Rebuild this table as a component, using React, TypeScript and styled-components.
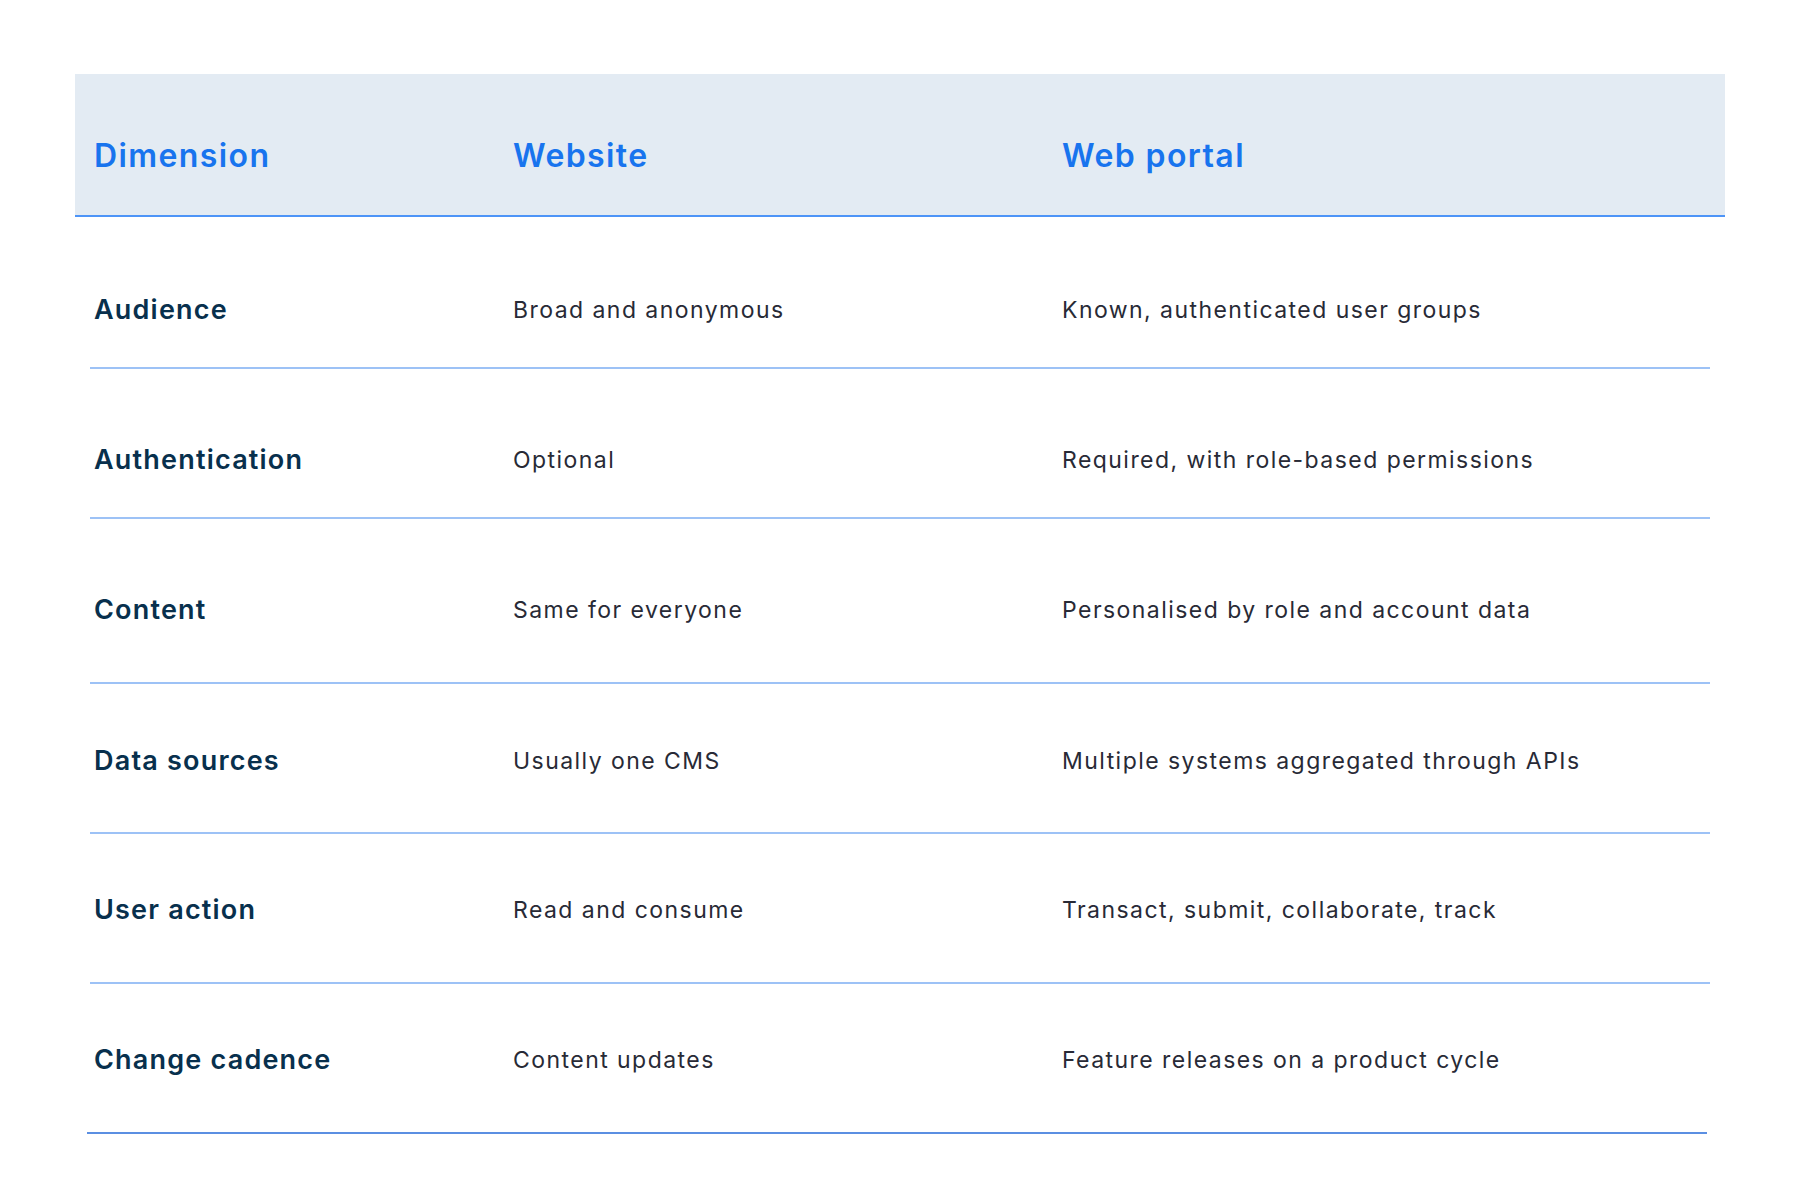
import React from "react";
import styled, { createGlobalStyle } from "styled-components";

const GlobalStyle = createGlobalStyle`
  html, body { margin: 0; padding: 0; background: #ffffff; }
  body { font-family: "Inter", "Liberation Sans", sans-serif; -webkit-font-smoothing: antialiased; }
`;

const Page = styled.div`
  padding: 74px 0 0 75px;
  width: 1650px;
`;

const Table = styled.div`
  display: flex;
  flex-direction: column;
`;

const HeaderRow = styled.div`
  display: grid;
  grid-template-columns: 419px 549px 1fr;
  padding: 62px 0 39px 19px;
  background: #e3ebf3;
  border-bottom: 2px solid #4d94f7;
`;

const HeaderCell = styled.div`
  font-family: "Inter", sans-serif;
  font-size: 32px;
  line-height: 40px;
  font-weight: 600;
  letter-spacing: 1.4px;
  color: #1874ee;
`;

const Body = styled.div`
  display: flex;
  flex-direction: column;
  margin: 0 15px;
`;

const Row = styled.div<{ $top: number; $bottom: number; $last?: boolean }>`
  display: grid;
  grid-template-columns: 419px 549px 1fr;
  align-items: center;
  padding: ${(p) => p.$top}px 0 ${(p) => p.$bottom}px ${(p) => (p.$last ? 7 : 4)}px;
  border-bottom: 2px solid ${(p) => (p.$last ? "#5b8fe2" : "#9dc2f6")};
  margin-left: ${(p) => (p.$last ? "-3px" : "0")};
  margin-right: ${(p) => (p.$last ? "3px" : "0")};
`;

const Label = styled.div`
  font-family: "Inter", sans-serif;
  font-size: 27px;
  line-height: 32px;
  font-weight: 600;
  letter-spacing: 1.2px;
  color: #08304d;
`;

const Value = styled.div`
  font-family: "Inter", sans-serif;
  font-size: 23px;
  line-height: 32px;
  font-weight: 400;
  letter-spacing: 1.45px;
  color: #282a36;
`;

type RowData = {
  label: string;
  website: string;
  portal: string;
  top: number;
  bottom: number;
};

const rows: RowData[] = [
  { label: "Audience", website: "Broad and anonymous", portal: "Known, authenticated user groups", top: 77, bottom: 41 },
  { label: "Authentication", website: "Optional", portal: "Required, with role-based permissions", top: 75, bottom: 41 },
  { label: "Content", website: "Same for everyone", portal: "Personalised by role and account data", top: 75, bottom: 56 },
  { label: "Data sources", website: "Usually one CMS", portal: "Multiple systems aggregated through APIs", top: 61, bottom: 55 },
  { label: "User action", website: "Read and consume", portal: "Transact, submit, collaborate, track", top: 60, bottom: 56 },
  { label: "Change cadence", website: "Content updates", portal: "Feature releases on a product cycle", top: 60, bottom: 56 },
];

export default function App() {
  return (
    <>
      <GlobalStyle />
      <Page>
        <Table>
          <HeaderRow>
            <HeaderCell>Dimension</HeaderCell>
            <HeaderCell>Website</HeaderCell>
            <HeaderCell>Web portal</HeaderCell>
          </HeaderRow>
          <Body>
            {rows.map((r, i) => (
              <Row key={r.label} $top={r.top} $bottom={r.bottom} $last={i === rows.length - 1}>
                <Label>{r.label}</Label>
                <Value>{r.website}</Value>
                <Value>{r.portal}</Value>
              </Row>
            ))}
          </Body>
        </Table>
      </Page>
    </>
  );
}
